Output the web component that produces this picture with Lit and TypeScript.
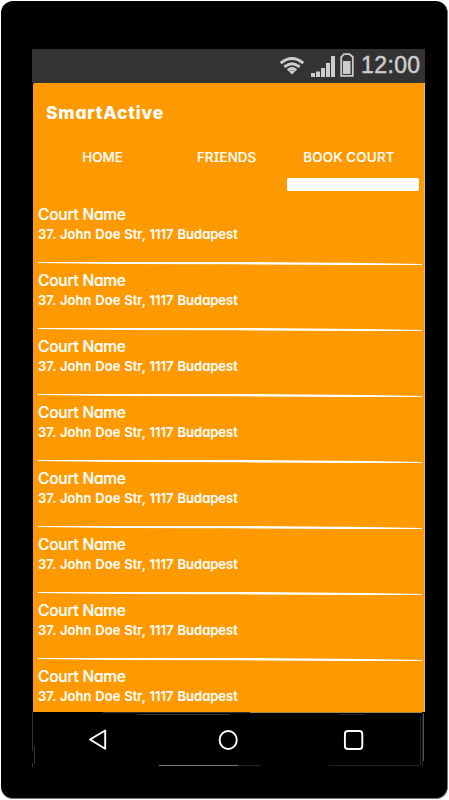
import { LitElement, html, css } from "lit";
import { customElement } from "lit/decorators.js";

const COURTS = Array.from({ length: 8 }, () => ({
  name: "Court Name",
  address: "37. John Doe Str, 1117 Budapest",
}));

@customElement("court-row")
class CourtRow extends LitElement {
  static properties = { name: {}, address: {} };
  declare name: string;
  declare address: string;

  static styles = css`
    :host { display: block; height: 66px; flex: none; box-sizing: border-box; padding: 5px 2px 0 5px; }
    .name { font-size: 15.5px; line-height: 20px; font-weight: 550; height: 20px; letter-spacing: -.22px; white-space: nowrap; -webkit-text-stroke: .2px #fff; }
    .address { font-size: 13px; line-height: 19px; font-weight: 600; height: 19px; word-spacing: .7px; white-space: nowrap; -webkit-text-stroke: .1px #fff; }
    .line { display: block; margin-top: 17px; width: 384px; height: 4px; }
  `;

  render() {
    return html`
      <div class="name">${this.name}</div>
      <div class="address">${this.address}</div>
      <svg class="line" viewBox="0 0 384 4">
        <path d="M0 1L200 1L270 1.4L330 2L384 2.9V4L300 3.9L200 3.3L80 3L40 2.4L0 2Z" fill="#fff" />
      </svg>
    `;
  }
}

@customElement("app-root")
class AppRoot extends LitElement {
  static styles = css`
    :host { display: block; width: 449px; height: 800px; background: #fff; overflow: hidden; box-sizing: border-box; padding: 1px;
      font-family: Inter, "Liberation Sans", sans-serif; font-feature-settings: "cv11"; color: #fff; }
    .phone { width: 447px; height: 798px; box-sizing: border-box; background: #000; border-radius: 12px;
      padding: 48px 0 0 31px; border-right: 1px solid #777; border-bottom: 1px solid #777; }
    .status { width: 393px; height: 34px; background: #333; display: flex; box-sizing: border-box; }
    .icons { width: 79px; height: 34px; margin-left: 246px; flex: none; }
    .clock { font-family: "Liberation Sans", sans-serif; font-size: 23px; line-height: 32px; color: #ccc; margin-left: 4px; letter-spacing: .4px; white-space: nowrap; -webkit-text-stroke: .5px #ccc; }
    .screen { width: 391px; height: 629px; margin-left: 1px; background: #f90; border-right: 1px solid #ccc08a; overflow: hidden; display: flex; flex-direction: column; border-radius: 2px 0 0 0; }
    .title { margin: 18px 0 0 13px; height: 24px; font-size: 17.5px; line-height: 24px; font-weight: 800; letter-spacing: .8px; flex: none; }
    .tabs { display: grid; grid-template-columns: 139px 109px 136px; height: 20px; margin-top: 22px; flex: none; }
    .tab { font-size: 13.4px; line-height: 20px; font-weight: 550; text-align: center; white-space: nowrap; font-feature-settings: "cv08"; -webkit-text-stroke: .15px #fff; }
    .tab:last-child { letter-spacing: .2px; }
    .indicator { flex: none; width: 132px; height: 13px; margin: 11px 0 0 254px; background: #fff; border-radius: 1.5px; }
    .list { margin-top: 9px; flex: none; }
    .nav { display: block; width: 394px; height: 56px; }
  `;

  render() {
    return html`
      <div class="phone">
        <div class="status">
          <svg class="icons" viewBox="278 49 79 34">
            <g fill="none" stroke="#ccc" stroke-width="2.9">
              <path d="M280.7 63.2Q292 54 303.3 63.2" />
              <path d="M284.3 66.9Q292 60.5 299.7 66.9" />
              <path d="M287.8 70.3Q292 66.8 296.2 70.3" />
            </g>
            <path d="M289 71.4Q292 69.2 295 71.4L292 74.5Z" fill="#ccc" />
            <path d="M311 73h4v4h-4zM316 71.5h4v5.5h-4zM321 68h4v9h-4zM326 63h4v14h-4zM331 56h4v21h-4z" fill="#ccc" />
            <path d="M341.2 75.8V57L344 54.2H349.5L352.8 57V75.8Z" fill="none" stroke="#ccc" stroke-width="1.8" />
            <path d="M343 61h7.5v13h-7.5z" fill="#ccc" />
          </svg>
          <div class="clock">12:00</div>
        </div>
        <div class="screen">
          <div class="title">SmartActive</div>
          <div class="tabs">
            <div class="tab">HOME</div>
            <div class="tab">FRIENDS</div>
            <div class="tab">BOOK COURT</div>
          </div>
          <div class="indicator"></div>
          <div class="list">
            ${COURTS.map((c) => html`<court-row .name=${c.name} .address=${c.address}></court-row>`)}
          </div>
        </div>
        <svg class="nav" viewBox="32 712 394 56">
          <g fill="none" stroke="#fff" stroke-width="1.9" stroke-linejoin="round">
            <path d="M90 739.5L105.2 730.5V748.8Z" />
            <ellipse cx="228.2" cy="740" rx="8.6" ry="9" />
            <rect x="344.9" y="731" width="17.4" height="18" rx="3" />
          </g>
          <g fill="none" stroke="#222" stroke-width="1">
            <path d="M32.5 712V751M34.5 746V764M32.5 763V767M137 714.5H230M103 712.5H250" stroke="#333" />
            <path d="M159 765.5H238" stroke="#777" />
            <path d="M238 765.5H261M329 765.5H420M420.5 716V765M422.5 714V766M340 714.5H363" />
            <path d="M423.5 713V761" stroke="#555" />
            <path d="M250 712.5H422" stroke="#a88448" />
          </g>
        </svg>
      </div>
    `;
  }
}
